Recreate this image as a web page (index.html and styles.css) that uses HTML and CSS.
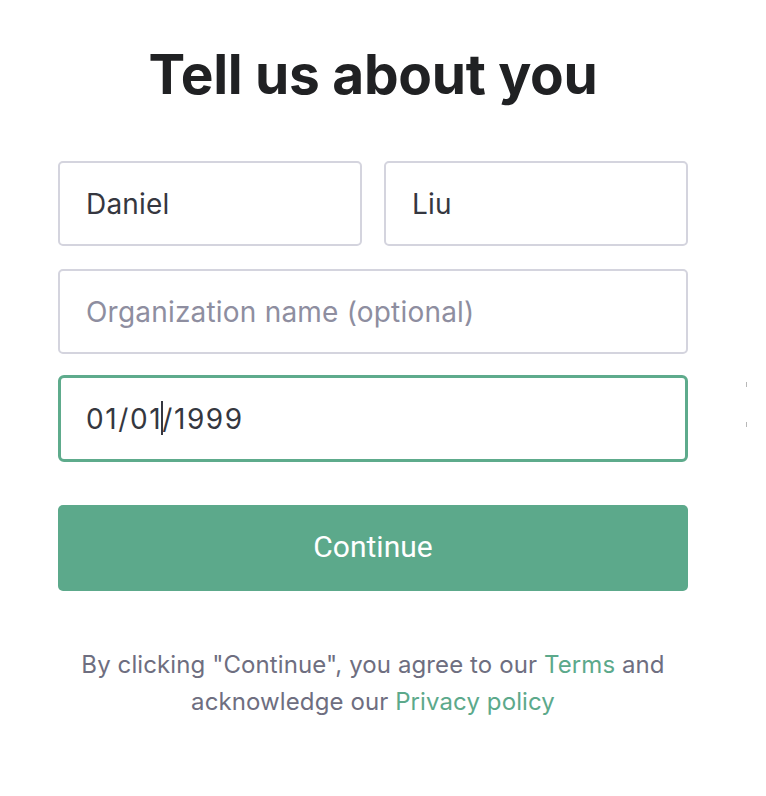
FILE: index.html
```html
<!DOCTYPE html>
<html>
<head>
<meta charset="utf-8">
<link rel="stylesheet" href="styles.css">
</head>
<body>
<main class="page">
  <h1 class="title">Tell us about you</h1>
  <form class="form">
    <div class="row">
      <div class="field"><span class="value">Daniel</span></div>
      <div class="field"><span class="value">Liu</span></div>
    </div>
    <div class="field"><span class="placeholder">Organization name (optional)</span></div>
    <div class="field focused"><span class="value date">01/01<span class="caret"></span>/1999</span></div>
    <button type="button" class="continue">Continue</button>
  </form>
  <p class="legal">By clicking "Continue", you agree to our <a class="link">Terms</a> and<br>acknowledge our <a class="link">Privacy policy</a></p>
</main>
<span class="tick tick-a"></span>
<span class="tick tick-b"></span>
</body>
</html>
```
FILE: styles.css
```css
html, body {
  margin: 0;
  padding: 0;
  background: #ffffff;
}
body {
  width: 766px;
  height: 796px;
  position: relative;
  overflow: hidden;
  font-family: Inter, "Noto Sans", sans-serif;
}
.page {
  width: 630px;
  margin-left: 58px;
  padding-top: 40px;
  display: flex;
  flex-direction: column;
}
.title {
  margin: 0;
  text-align: center;
  font-size: 55px;
  font-weight: 700;
  color: #202123;
  line-height: 68px;
  letter-spacing: -0.3px;
}
.form {
  margin-top: 53px;
  display: flex;
  flex-direction: column;
  gap: 23px;
}
.row {
  display: flex;
  gap: 22px;
}
.row .field { flex: 1; }
.field {
  box-sizing: border-box;
  height: 85px;
  border: 2px solid #d4d4de;
  border-radius: 5px;
  display: flex;
  align-items: center;
  padding-left: 26px;
  font-size: 28px;
  letter-spacing: 0.2px;
}
.field.focused {
  border: 3px solid #5eab8c;
  height: 87px;
  border-radius: 6px;
  padding-left: 25px;
  margin-top: -2px;
}
.value { color: #353740; }
.value.date { letter-spacing: 1.6px; }
.placeholder { color: #8e8ea0; }
.caret {
  display: inline-block;
  width: 2px;
  height: 34px;
  background: #353740;
  vertical-align: -6px;
  margin: 0 -1px;
}
.continue {
  margin-top: 20px;
  height: 86px;
  border: none;
  border-radius: 5px;
  background: #5ca98b;
  color: #ffffff;
  font-family: Roboto, sans-serif;
  font-size: 30px;
  font-weight: 400;
  padding: 0 0 4px;
  cursor: pointer;
}
.legal {
  margin: 55px 0 0;
  text-align: center;
  font-size: 24px;
  line-height: 37px;
  letter-spacing: 0.1px;
  color: #6e6e80;
}
.link {
  color: #5ca98b;
  text-decoration: none;
}
.tick {
  position: absolute;
  left: 746px;
  width: 1px;
  height: 5px;
  background: #b8b8b8;
}
.tick-a { top: 382px; }
.tick-b { top: 422px; }
```
